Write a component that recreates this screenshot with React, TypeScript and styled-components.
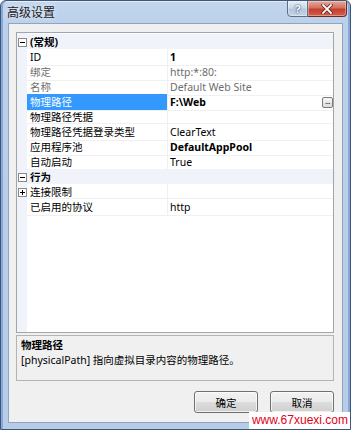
import React from "react";
import styled, { createGlobalStyle } from "styled-components";

const Global = createGlobalStyle`
  html, body { margin: 0; padding: 0; background: #ffffff; }
  body { font-family: "Noto Sans", "Noto Sans CJK SC", sans-serif; }
  * { box-sizing: border-box; }
`;

const Window = styled.div`
  position: relative;
  width: 351px;
  height: 430px;
  display: flex;
  flex-direction: column;
  border: 1px solid #3f5676;
  border-radius: 6px 6px 0 0;
  background: linear-gradient(to bottom, #c3d6ee 0px, #bcd0ea 22px, #b7cce6 100%);
  box-shadow: inset 2px 0 0 #86a8d8, inset -2px 0 0 #86a8d8, inset 0 1px 0 #e4edf8;
  overflow: hidden;
`;

const TitleBar = styled.div`
  height: 22px;
  flex: none;
  display: flex;
  align-items: flex-start;
  justify-content: space-between;
  padding-left: 6px;
  padding-right: 3px;
`;

const Title = styled.div`
  font-family: "Noto Sans CJK SC", sans-serif;
  font-size: 12px;
  line-height: 22px;
  color: #1b1b1b;
  text-shadow: 0 0 6px rgba(255, 255, 255, 0.9);
`;

const Caption = styled.div`
  display: flex;
  margin-top: -1px;
`;

const CapButton = styled.div<{ $close?: boolean }>`
  width: ${(p) => (p.$close ? 39 : 21)}px;
  height: 17px;
  display: flex;
  align-items: center;
  justify-content: center;
  border: 1px solid ${(p) => (p.$close ? "#6b2a24" : "#5d6f87")};
  border-left-width: ${(p) => (p.$close ? 0 : 1)}px;
  border-radius: ${(p) => (p.$close ? "0 0 4px 0" : "0 0 0 4px")};
  background: ${(p) =>
    p.$close
      ? "linear-gradient(to bottom, #e8a99b 0%, #d4705f 45%, #c2402f 55%, #d2604c 100%)"
      : "linear-gradient(to bottom, #e6eef8 0%, #cbd9ea 45%, #b3c6de 55%, #c5d6ea 100%)"};
  box-shadow: inset 0 0 0 1px rgba(255, 255, 255, 0.35);
  font-family: "Liberation Sans", sans-serif;
  font-size: 11px;
  font-weight: bold;
  color: #ffffff;
  text-shadow: 0 0 1px #3a4a60, 0 0 2px #3a4a60;
`;

const Client = styled.div`
  flex: 1;
  margin: 0 7px 6px 7px;
  border: 1px solid #8fa4c0;
  background: #f0f0f0;
  display: flex;
  flex-direction: column;
  padding: 8px 8px 0 7px;
`;

const Grid = styled.div`
  height: 301px;
  border: 1px solid #a0a6ae;
  background: #ffffff;
  display: flex;
  flex-direction: column;
  position: relative;
  padding-top: 1px;
`;

const Gutter = styled.div`
  position: absolute;
  left: 0;
  top: 0;
  bottom: 0;
  width: 10px;
  background: #f0f4fa;
`;

const Row = styled.div<{ $cat?: boolean }>`
  position: relative;
  height: 15px;
  display: grid;
  grid-template-columns: 10px 141px 1fr;
  background: ${(p) => (p.$cat ? "#f0f4fa" : "transparent")};
  font-size: 10.5px;
  line-height: 16px;
`;

const Expander = styled.div`
  display: flex;
  align-items: center;
  justify-content: center;
  padding-left: 1px;
  padding-top: 1px;
`;

const Box = styled.div<{ $plus?: boolean }>`
  position: relative;
  width: 9px;
  height: 9px;
  border: 1px solid #8a8a8a;
  background: #ffffff;
  &::before {
    content: "";
    position: absolute;
    left: 1px;
    top: 3px;
    width: 5px;
    height: 1px;
    background: #000000;
  }
  &::after {
    content: "";
    display: ${(p) => (p.$plus ? "block" : "none")};
    position: absolute;
    left: 3px;
    top: 1px;
    width: 1px;
    height: 5px;
    background: #000000;
  }
`;

const CatLabel = styled.div`
  grid-column: 2 / 4;
  padding-left: 3px;
  font-weight: bold;
  color: #000000;
  white-space: nowrap;
`;

const NameCell = styled.div<{ $sel?: boolean; $gray?: boolean }>`
  padding-left: 3px;
  border-right: 1px solid #f0f0f0;
  border-bottom: 1px solid #f0f0f0;
  background: ${(p) => (p.$sel ? "#3399ff" : "transparent")};
  color: ${(p) => (p.$sel ? "#ffffff" : p.$gray ? "#6d6d6d" : "#000000")};
  white-space: nowrap;
  overflow: hidden;
`;

const ValueCell = styled.div<{ $bold?: boolean; $gray?: boolean }>`
  padding-left: 2px;
  padding-right: 0;
  border-bottom: 1px solid #f0f0f0;
  display: flex;
  align-items: center;
  justify-content: space-between;
  font-weight: ${(p) => (p.$bold ? "bold" : "normal")};
  color: ${(p) => (p.$gray ? "#6d6d6d" : "#000000")};
  white-space: nowrap;
`;

const DotButton = styled.div`
  width: 11px;
  height: 11px;
  border: 1px solid #7a7a7a;
  border-radius: 2px;
  background: linear-gradient(to bottom, #f6f6f6, #dcdcdc);
  font-size: 8px;
  line-height: 5px;
  text-align: center;
  font-weight: normal;
  color: #000;
  letter-spacing: -0.5px;
`;

const Desc = styled.div`
  margin-top: 2px;
  height: 46px;
  border: 1px solid #b4b4b4;
  background: #f0f0f0;
  padding: 2px 4px;
  font-size: 10.5px;
  line-height: 15px;
  color: #000000;
`;

const DescTitle = styled.div`
  font-weight: bold;
`;

const Buttons = styled.div`
  margin-top: 10px;
  display: flex;
  justify-content: flex-end;
  gap: 12px;
`;

const Button = styled.div`
  width: 64px;
  height: 22px;
  border: 1px solid #707070;
  border-radius: 3px;
  background: linear-gradient(to bottom, #f2f2f2 0%, #ebebeb 50%, #dddddd 51%, #cfcfcf 100%);
  box-shadow: inset 0 0 0 1px rgba(255, 255, 255, 0.7);
  display: flex;
  align-items: center;
  justify-content: center;
  font-family: "Noto Sans CJK SC", sans-serif;
  font-size: 10.5px;
  color: #000000;
`;

const Watermark = styled.div`
  position: absolute;
  right: 0;
  bottom: 0;
  height: 17px;
  padding: 0 2px 0 3px;
  background: #ffffff;
  color: #e2001a;
  font-family: "Liberation Sans", Arial, sans-serif;
  font-size: 12px;
  line-height: 17px;
  white-space: nowrap;
`;

type Item =
  | { cat: true; label: string; plus?: boolean }
  | {
      cat?: false;
      name: string;
      value: string;
      bold?: boolean;
      gray?: boolean;
      sel?: boolean;
      dots?: boolean;
      plus?: boolean;
    };

const items: Item[] = [
  { cat: true, label: "(常规)" },
  { name: "ID", value: "1", bold: true },
  { name: "绑定", value: "http:*:80:", gray: true },
  { name: "名称", value: "Default Web Site", gray: true },
  { name: "物理路径", value: "F:\\Web", bold: true, sel: true, dots: true },
  { name: "物理路径凭据", value: "" },
  { name: "物理路径凭据登录类型", value: "ClearText" },
  { name: "应用程序池", value: "DefaultAppPool", bold: true },
  { name: "自动启动", value: "True" },
  { cat: true, label: "行为" },
  { name: "连接限制", value: "", plus: true },
  { name: "已启用的协议", value: "http" },
];

const CloseGlyph = () => (
  <svg width="12" height="10" viewBox="0 0 12 10">
    <path d="M2 1 L10 9 M10 1 L2 9" stroke="#5a1a14" strokeWidth="3.2" strokeLinecap="square" />
    <path d="M2 1 L10 9 M10 1 L2 9" stroke="#ffffff" strokeWidth="1.8" strokeLinecap="square" />
  </svg>
);

export default function App() {
  return (
    <>
      <Global />
      <Window>
        <TitleBar>
          <Title>高级设置</Title>
          <Caption>
            <CapButton>?</CapButton>
            <CapButton $close>
              <CloseGlyph />
            </CapButton>
          </Caption>
        </TitleBar>
        <Client>
          <Grid>
            <Gutter />
            {items.map((it, i) =>
              it.cat ? (
                <Row key={i} $cat>
                  <Expander>
                    <Box />
                  </Expander>
                  <CatLabel>{it.label}</CatLabel>
                </Row>
              ) : (
                <Row key={i}>
                  <Expander>{it.plus ? <Box $plus /> : null}</Expander>
                  <NameCell $sel={it.sel} $gray={it.gray}>
                    {it.name}
                  </NameCell>
                  <ValueCell $bold={it.bold} $gray={it.gray}>
                    <span>{it.value}</span>
                    {it.dots ? <DotButton>...</DotButton> : null}
                  </ValueCell>
                </Row>
              )
            )}
          </Grid>
          <Desc>
            <DescTitle>物理路径</DescTitle>
            <div>[physicalPath] 指向虚拟目录内容的物理路径。</div>
          </Desc>
          <Buttons>
            <Button>确定</Button>
            <Button>取消</Button>
          </Buttons>
        </Client>
        <Watermark>www.67xuexi.com</Watermark>
      </Window>
    </>
  );
}
